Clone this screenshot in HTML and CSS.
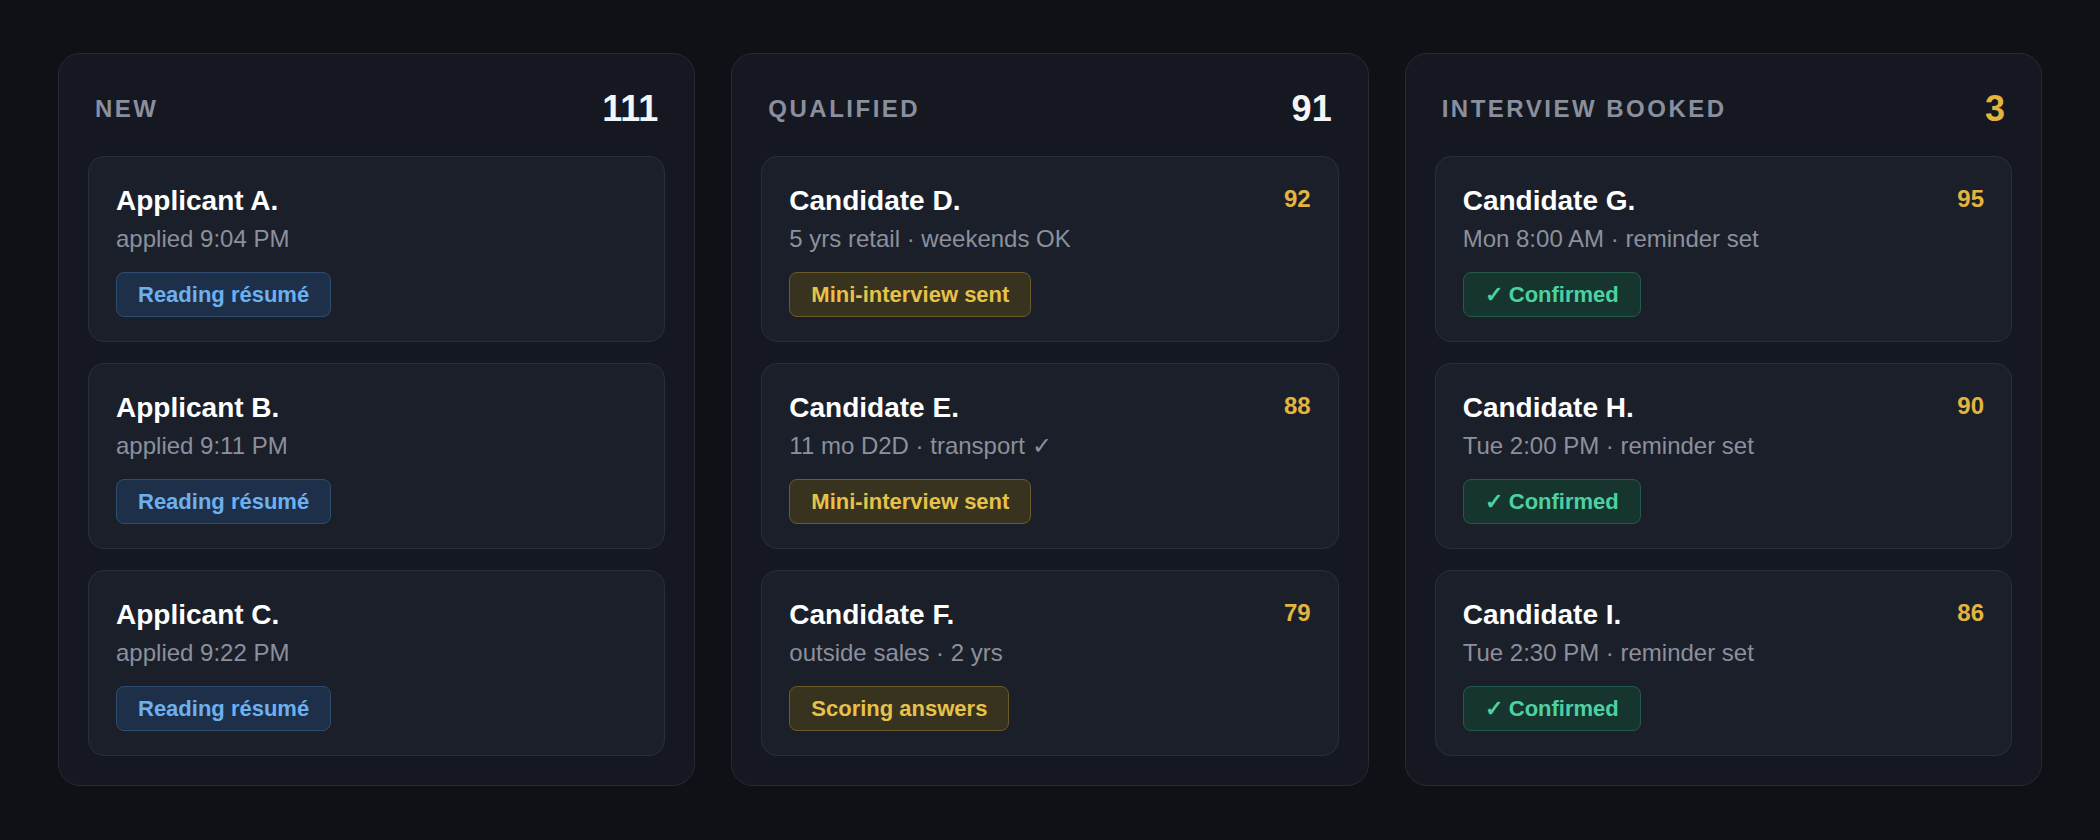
FILE: index.html
```html
<!DOCTYPE html>
<html lang="en">
<head>
    <meta charset="UTF-8">
    <meta name="viewport" content="width=device-width, initial-scale=1.0">
    <title>Hiring Pipeline</title>
    <link rel="stylesheet" href="styles.css">
</head>
<body>
    <div class="board">
        <div class="lane">
            <div class="lane-header">
                <span class="lane-title">New</span>
                <span class="lane-count">111</span>
            </div>
            <div class="card">
                <div class="card-top"><span class="card-name">Applicant A.</span></div>
                <div class="card-meta">applied 9:04 PM</div>
                <span class="tag tag-blue">Reading résumé</span>
            </div>
            <div class="card">
                <div class="card-top"><span class="card-name">Applicant B.</span></div>
                <div class="card-meta">applied 9:11 PM</div>
                <span class="tag tag-blue">Reading résumé</span>
            </div>
            <div class="card">
                <div class="card-top"><span class="card-name">Applicant C.</span></div>
                <div class="card-meta">applied 9:22 PM</div>
                <span class="tag tag-blue">Reading résumé</span>
            </div>
        </div>

        <div class="lane">
            <div class="lane-header">
                <span class="lane-title">Qualified</span>
                <span class="lane-count">91</span>
            </div>
            <div class="card">
                <div class="card-top"><span class="card-name">Candidate D.</span><span class="card-score">92</span></div>
                <div class="card-meta">5 yrs retail · weekends OK</div>
                <span class="tag tag-yellow">Mini-interview sent</span>
            </div>
            <div class="card">
                <div class="card-top"><span class="card-name">Candidate E.</span><span class="card-score">88</span></div>
                <div class="card-meta">11 mo D2D · transport ✓</div>
                <span class="tag tag-yellow">Mini-interview sent</span>
            </div>
            <div class="card">
                <div class="card-top"><span class="card-name">Candidate F.</span><span class="card-score">79</span></div>
                <div class="card-meta">outside sales · 2 yrs</div>
                <span class="tag tag-yellow">Scoring answers</span>
            </div>
        </div>

        <div class="lane">
            <div class="lane-header">
                <span class="lane-title">Interview booked</span>
                <span class="lane-count gold">3</span>
            </div>
            <div class="card">
                <div class="card-top"><span class="card-name">Candidate G.</span><span class="card-score">95</span></div>
                <div class="card-meta">Mon 8:00 AM · reminder set</div>
                <span class="tag tag-green">✓ Confirmed</span>
            </div>
            <div class="card">
                <div class="card-top"><span class="card-name">Candidate H.</span><span class="card-score">90</span></div>
                <div class="card-meta">Tue 2:00 PM · reminder set</div>
                <span class="tag tag-green">✓ Confirmed</span>
            </div>
            <div class="card">
                <div class="card-top"><span class="card-name">Candidate I.</span><span class="card-score">86</span></div>
                <div class="card-meta">Tue 2:30 PM · reminder set</div>
                <span class="tag tag-green">✓ Confirmed</span>
            </div>
        </div>
    </div>
</body>
</html>
```

FILE: styles.css
```css
body {
    font-family: 'Liberation Sans', Arial, sans-serif;
    margin: 0;
    padding: 0;
    background-color: #0f1116;
    color: #f4f5f7;
}

.board {
    display: grid;
    grid-template-columns: repeat(3, 1fr);
    gap: 36px;
    padding: 53px 58px;
}

.lane {
    background-color: #151821;
    border: 1px solid #252a35;
    border-radius: 22px;
    padding: 28px 29px 29px;
    display: flex;
    flex-direction: column;
    gap: 21px;
}

.lane-header {
    display: flex;
    justify-content: space-between;
    align-items: center;
    padding: 0 7px;
    height: 53px;
}

.lane-title {
    font-size: 24px;
    font-weight: bold;
    letter-spacing: 2.5px;
    text-transform: uppercase;
    color: #8a8f9d;
}

.lane-count {
    font-size: 36px;
    font-weight: bold;
    color: #f4f5f7;
}

.lane-count.gold {
    color: #e2b53e;
}

.card {
    background-color: #1b1f2a;
    border: 1px solid #2a2f3b;
    border-radius: 16px;
    padding: 28px 27px 22px;
    height: 134px;
}

.card-top {
    display: flex;
    justify-content: space-between;
    align-items: flex-start;
    line-height: 32px;
}

.card-name {
    font-size: 28px;
    font-weight: bold;
    color: #ffffff;
}

.card-score {
    font-size: 24px;
    line-height: 28px;
    font-weight: bold;
    color: #e2b53e;
}

.card-meta {
    font-size: 24px;
    line-height: 31px;
    margin-top: 6px;
    color: #8b909c;
}

.tag {
    display: inline-block;
    margin-top: 18px;
    padding: 9px 21px;
    font-size: 22px;
    line-height: 25px;
    font-weight: bold;
    border-radius: 8px;
    border: 1px solid;
}

.tag-blue {
    background-color: #1e3049;
    border-color: #2f4c70;
    color: #6db0f0;
}

.tag-yellow {
    background-color: #37331f;
    border-color: #6b5a2a;
    color: #e8c14a;
}

.tag-green {
    background-color: #17352f;
    border-color: #245a4b;
    color: #4cd2a0;
}
```
